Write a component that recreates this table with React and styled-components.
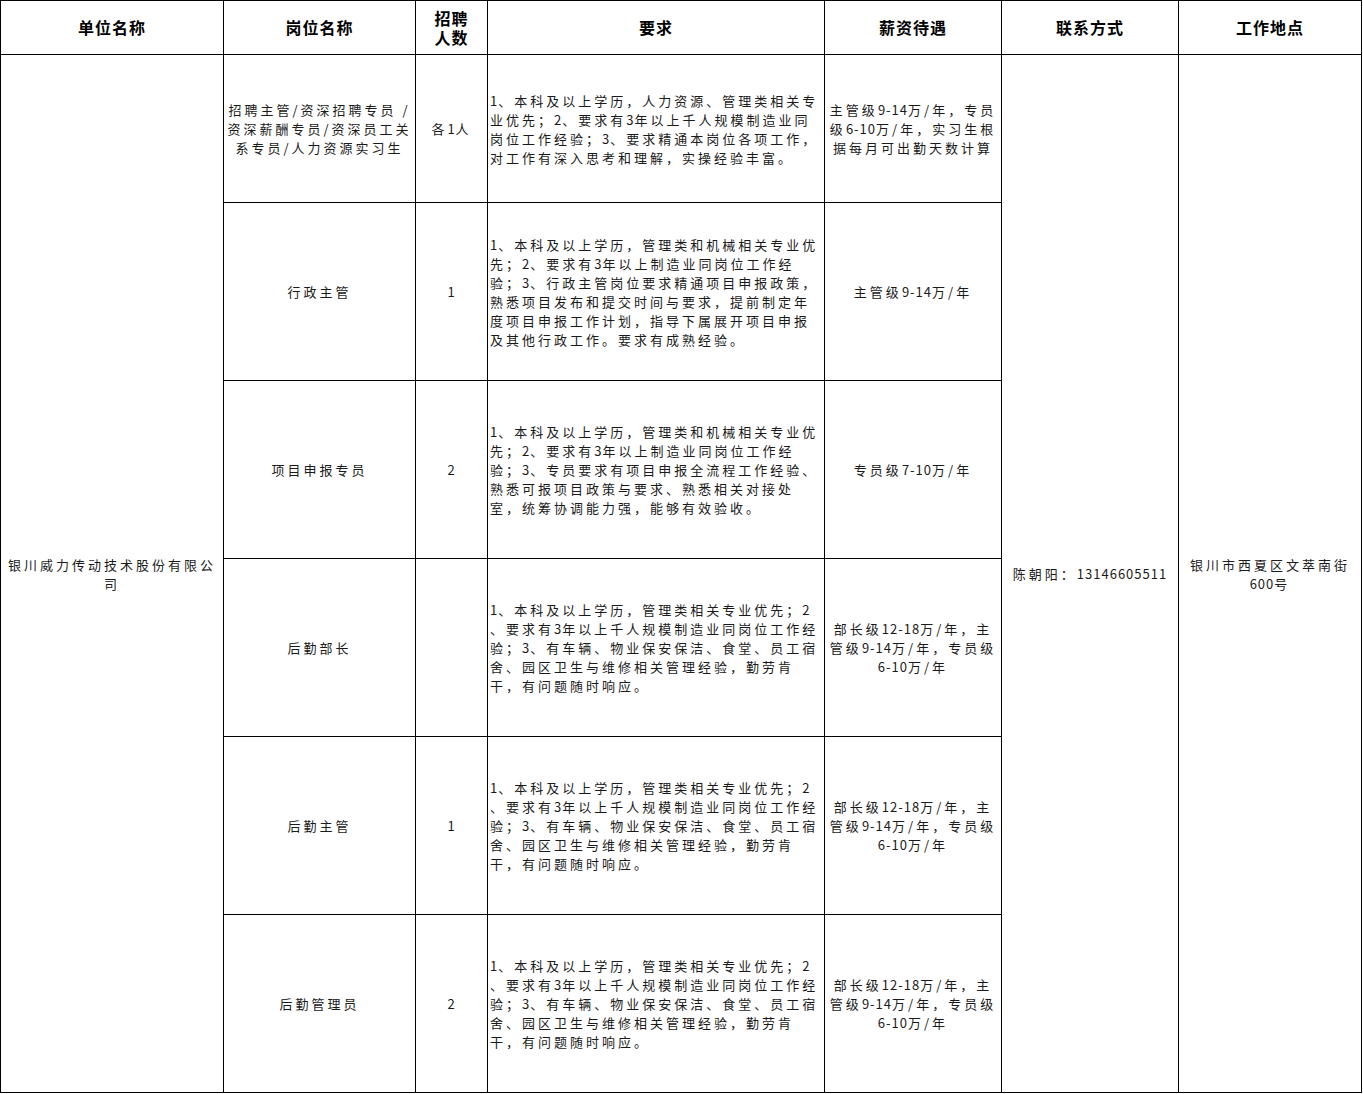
import React from "react";
import styled, { createGlobalStyle } from "styled-components";

const GlobalStyle = createGlobalStyle`
  html, body {
    margin: 0;
    padding: 0;
    background: #fff;
  }
  body {
    font-family: "Noto Sans CJK SC", "Noto Sans", sans-serif;
    color: #1a1a1a;
  }
`;

const REQ_HR =
  "1、本科及以上学历，人力资源、管理类相关专\n业优先；2、要求有3年以上千人规模制造业同\n岗位工作经验；3、要求精通本岗位各项工作，\n对工作有深入思考和理解，实操经验丰富。";
const REQ_ADMIN =
  "1、本科及以上学历，管理类和机械相关专业优\n先；2、要求有3年以上制造业同岗位工作经\n验；3、行政主管岗位要求精通项目申报政策，\n熟悉项目发布和提交时间与要求，提前制定年\n度项目申报工作计划，指导下属展开项目申报\n及其他行政工作。要求有成熟经验。";
const REQ_PROJECT =
  "1、本科及以上学历，管理类和机械相关专业优\n先；2、要求有3年以上制造业同岗位工作经\n验；3、专员要求有项目申报全流程工作经验、\n熟悉可报项目政策与要求、熟悉相关对接处\n室，统筹协调能力强，能够有效验收。";
const REQ_LOGISTICS =
  "1、本科及以上学历，管理类相关专业优先；2\n、要求有3年以上千人规模制造业同岗位工作经\n验；3、有车辆、物业保安保洁、食堂、员工宿\n舍、园区卫生与维修相关管理经验，勤劳肯\n干，有问题随时响应。";
const PAY_LOGISTICS = "部长级12-18万/年，主\n管级9-14万/年，专员级\n6-10万/年";

const jobs = [
  {
    title: "招聘主管/资深招聘专员 /\n资深薪酬专员/资深员工关\n系专员/人力资源实习生",
    count: "各1人",
    req: REQ_HR,
    pay: "主管级9-14万/年，专员\n级6-10万/年，实习生根\n据每月可出勤天数计算",
    height: 148,
  },
  { title: "行政主管", count: "1", req: REQ_ADMIN, pay: "主管级9-14万/年", height: 178 },
  { title: "项目申报专员", count: "2", req: REQ_PROJECT, pay: "专员级7-10万/年", height: 178 },
  { title: "后勤部长", count: "", req: REQ_LOGISTICS, pay: PAY_LOGISTICS, height: 178 },
  { title: "后勤主管", count: "1", req: REQ_LOGISTICS, pay: PAY_LOGISTICS, height: 178 },
  { title: "后勤管理员", count: "2", req: REQ_LOGISTICS, pay: PAY_LOGISTICS, height: 178 },
];

const columns = [223, 192, 72, 337, 177, 177, 183];

const Table = styled.table`
  border-collapse: collapse;
  table-layout: fixed;
  width: 1361px;
`;

const HeadRow = styled.tr`
  height: 54px;
`;

const Th = styled.th`
  border: 1px solid #000;
  padding: 0;
  font-size: 16px;
  font-weight: 700;
  line-height: 19px;
  letter-spacing: 1px;
  color: #000;
  text-align: center;
  vertical-align: middle;
  white-space: pre;
`;

const Row = styled.tr`
  height: ${(p) => p.$h}px;
`;

const Td = styled.td`
  border: 1px solid #000;
  padding: ${(p) => (p.$left ? "0 0 0 2px" : "0")};
  font-size: 13px;
  line-height: 19px;
  letter-spacing: 3px;
  text-align: ${(p) => (p.$left ? "left" : "center")};
  vertical-align: middle;
  white-space: pre;
  overflow: hidden;
`;

const Line = styled.div`
  height: 19px;
`;

const Num = styled.span`
  letter-spacing: 1px;
`;

// each sheet line is its own block; digits are set tighter than the CJK characters
function Text({ children }) {
  return children.split("\n").map((line, n) => (
    <Line key={n}>
      {line
        .split(/([0-9\-]+)/)
        .filter(Boolean)
        .map((part, i) =>
          /^[0-9\-]+$/.test(part) ? <Num key={i}>{part}</Num> : part
        )}
    </Line>
  ));
}

function App() {
  return (
    <>
      <GlobalStyle />
      <Table>
        <colgroup>
          {columns.map((w, i) => (
            <col key={i} style={{ width: w }} />
          ))}
        </colgroup>
        <thead>
          <HeadRow>
            <Th>单位名称</Th>
            <Th>岗位名称</Th>
            <Th>{"招聘\n人数"}</Th>
            <Th>要求</Th>
            <Th>薪资待遇</Th>
            <Th>联系方式</Th>
            <Th>工作地点</Th>
          </HeadRow>
        </thead>
        <tbody>
          {jobs.map((job, i) => (
            <Row key={i} $h={job.height}>
              {i === 0 && (
                <Td rowSpan={jobs.length}>
                  <Text>{"银川威力传动技术股份有限公\n司"}</Text>
                </Td>
              )}
              <Td>
                <Text>{job.title}</Text>
              </Td>
              <Td>
                <Text>{job.count}</Text>
              </Td>
              <Td $left>
                <Text>{job.req}</Text>
              </Td>
              <Td>
                <Text>{job.pay}</Text>
              </Td>
              {i === 0 && (
                <Td rowSpan={jobs.length}>
                  <Text>陈朝阳：13146605511</Text>
                </Td>
              )}
              {i === 0 && (
                <Td rowSpan={jobs.length}>
                  <Text>{"银川市西夏区文萃南街\n600号"}</Text>
                </Td>
              )}
            </Row>
          ))}
        </tbody>
      </Table>
    </>
  );
}

export default App;
